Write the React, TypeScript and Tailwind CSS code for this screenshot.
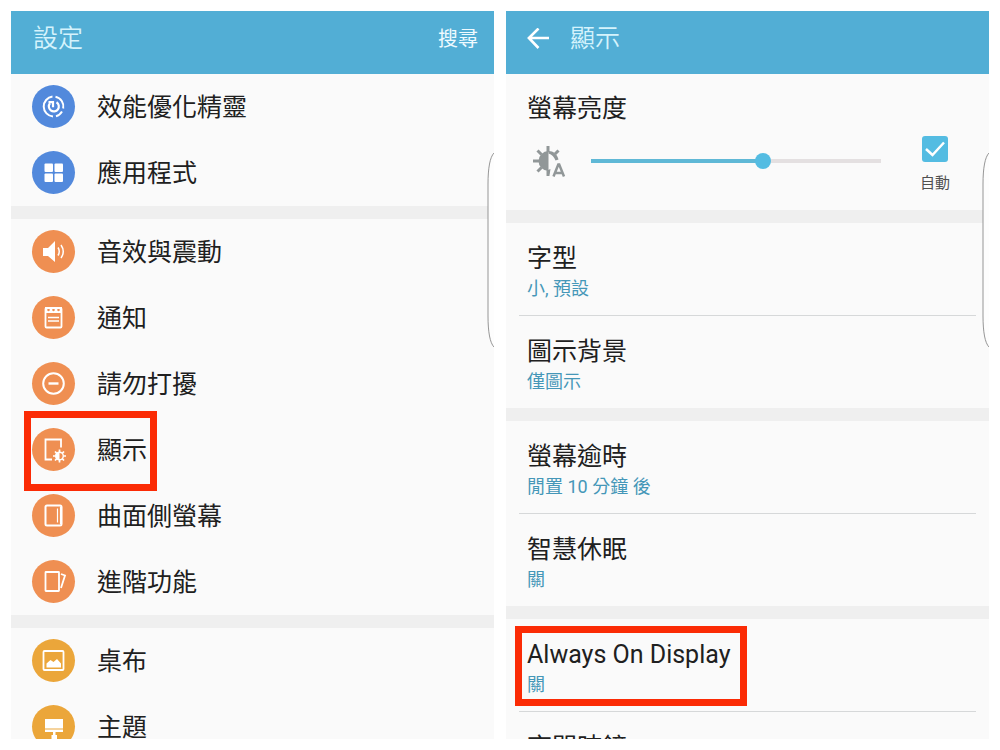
import type { ReactNode } from 'react'

interface MenuItem {
  label: string
  color: string
  icon: ReactNode
  highlighted?: boolean
}

interface OptionRowProps {
  title: string
  summary?: string
  divider?: boolean
  highlighted?: boolean
}

const BLUE = 'bg-[#5289dc]'
const ORANGE = 'bg-[#ef8f52]'
const YELLOW = 'bg-[#eba63a]'

const optimizerIcon = (
  <g fill="none" strokeWidth="2">
    <path d="M23.5 11.7A10 10 0 0 1 31.2 23.5M30 26.5A10 10 0 0 1 24 31.2M21 31.5A10 10 0 0 1 20.5 11.6" />
    <path d="M24.5 17.2A5 5 0 1 1 18 18.2M16.5 17.2h4.5v5" strokeWidth="2.2" />
  </g>
)

const appsIcon = (
  <g stroke="none">
    <rect x="12.5" y="12.5" width="8.5" height="8.5" rx="1" />
    <rect x="22.5" y="12.5" width="8.5" height="8.5" rx="1" />
    <rect x="12.5" y="22.5" width="8.5" height="8.5" rx="1" />
    <rect x="22.5" y="22.5" width="8.5" height="8.5" rx="1" />
  </g>
)

const soundIcon = (
  <g>
    <path d="M11 18h5l7-7v21l-7-6h-5z" stroke="none" />
    <path d="M26 17.5q2.5 4 0 8M29 15q4.5 6.5 0 13" fill="none" strokeWidth="1.5" />
  </g>
)

const noticeIcon = (
  <g>
    <rect x="13.5" y="12" width="16" height="19.5" rx="1" fill="none" strokeWidth="1.8" />
    <path
      d="M13 11h17v6H13zM16.5 12.6a1.3 1.3 0 1 0 .01 0zM21.5 12.6a1.3 1.3 0 1 0 .01 0zM26.5 12.6a1.3 1.3 0 1 0 .01 0z"
      fillRule="evenodd"
      stroke="none"
    />
    <path d="M16 21.5h11M16 25h11" strokeWidth="1.5" />
  </g>
)

const blockIcon = (
  <g fill="none">
    <circle cx="21.5" cy="21.5" r="10.3" strokeWidth="2" />
    <path d="M16.5 21.5h10" strokeWidth="2.4" />
  </g>
)

const displayIcon = (
  <g fill="none">
    <path d="M20 31.500h-6.500v-20h15.500v8" strokeWidth="1.8" />
    <circle cx="27.5" cy="28" r="3.8" strokeWidth="1.4" />
    <path d="M27.5 24a4 4 0 0 0 0 8z" fill="white" stroke="none" />
    <path
      d="M27.500 21.500v2.500M27.500 32v2.500M21 28h2.500M31.500 28h2.500M23 23.500l1.600 1.600M32 23.500l-1.600 1.600M23 32.500l1.600-1.600M32 32.500l-1.600-1.600"
      strokeWidth="1.7"
    />
  </g>
)

const edgeIcon = (
  <g fill="none">
    <rect x="13.5" y="11.5" width="16" height="20" rx="1.5" strokeWidth="2" />
    <path d="M25.5 14.5v14" strokeWidth="1.2" />
    <path d="M29 13v17" strokeWidth="2.2" />
  </g>
)

const advancedIcon = (
  <g fill="none">
    <rect x="13.5" y="12" width="13.5" height="19" rx="0.5" strokeWidth="1.8" />
    <path d="M29 14l4 1.500-4 12.500" strokeWidth="1.8" />
  </g>
)

const wallpaperIcon = (
  <g>
    <rect x="11.5" y="12" width="20" height="19" rx="1" fill="none" strokeWidth="1.8" />
    <path d="M14.500 28.500v-4l4-3.500 3 2 3.500-3 4 4.500v4z" stroke="none" />
  </g>
)

const themeIcon = (
  <g stroke="none">
    <path d="M13 14h18v9.500H13zM13 24.500h18V27h-7.500v3H25v6h-5.500v-6H21v-3h-8z" />
  </g>
)

const menuGroups: MenuItem[][] = [
  [
    { label: '效能優化精靈', color: BLUE, icon: optimizerIcon },
    { label: '應用程式', color: BLUE, icon: appsIcon },
  ],
  [
    { label: '音效與震動', color: ORANGE, icon: soundIcon },
    { label: '通知', color: ORANGE, icon: noticeIcon },
    { label: '請勿打擾', color: ORANGE, icon: blockIcon },
    { label: '顯示', color: ORANGE, icon: displayIcon, highlighted: true },
    { label: '曲面側螢幕', color: ORANGE, icon: edgeIcon },
    { label: '進階功能', color: ORANGE, icon: advancedIcon },
  ],
  [
    { label: '桌布', color: YELLOW, icon: wallpaperIcon },
    { label: '主題', color: YELLOW, icon: themeIcon },
  ],
]

const optionGroups: OptionRowProps[][] = [
  [
    { title: '字型', summary: '小, 預設', divider: true },
    { title: '圖示背景', summary: '僅圖示' },
  ],
  [
    { title: '螢幕逾時', summary: '閒置 10 分鐘 後', divider: true },
    { title: '智慧休眠', summary: '關' },
  ],
  [
    { title: 'Always On Display', summary: '關', divider: true, highlighted: true },
    { title: '夜間時鐘' },
  ],
]

function Separator() {
  return <div className="h-[13px] bg-[#efefef]" />
}

// Handle of the edge panel, lies over the right border of the screen
function EdgeHandle() {
  return (
    <svg className="absolute top-[141px] right-0" width="7" height="196" viewBox="0 0 7 196">
      <path d="M7 1C3 5 1 16 1 32v132c0 16 2 27 6 31z" fill="#fdfdfd" />
      <path d="M7 1C3 5 1 16 1 32v132c0 16 2 27 6 31" fill="none" stroke="#8a8a8a" strokeWidth="0.9" />
    </svg>
  )
}

function MenuRow({ label, color, icon, highlighted }: MenuItem) {
  return (
    <li className="relative">
      <button
        type="button"
        className="flex h-[66px] w-full items-center gap-[22px] pb-0.5 pl-[21px] text-left"
      >
        <span className={`size-[43px] shrink-0 rounded-full ${color}`}>
          <svg viewBox="0 0 43 43" fill="white" stroke="white" className="size-full" aria-hidden="true">
            {icon}
          </svg>
        </span>
        <span className="pt-1 text-[25px] leading-8">{label}</span>
      </button>
      {highlighted && (
        <span className="pointer-events-none absolute -top-1.5 left-[13px] h-20 w-[133px] border-[7px] border-[#fb2b05]" />
      )}
    </li>
  )
}

function OptionRow({ title, summary, divider, highlighted }: OptionRowProps) {
  return (
    <li className={`relative mx-[13px] ${divider ? 'border-b border-[#d6d8d9]' : ''}`}>
      <button type="button" className="block w-full px-2 pt-5 pb-3 text-left">
        <span className="block text-[25px] leading-8">{title}</span>
        {summary && <span className="block text-lg leading-7 text-[#4597b8]">{summary}</span>}
      </button>
      {highlighted && (
        <span className="pointer-events-none absolute top-[7px] -left-1 h-20 w-[232px] border-[7px] border-[#fb2b05]" />
      )}
    </li>
  )
}

function SettingsPanel() {
  return (
    <section className="relative min-w-0 flex-1 overflow-hidden bg-[#fafafa]">
      <header className="flex h-[63px] items-center justify-between bg-[#52aed5] pr-4 pb-2 pl-[22px]">
        <h1 className="text-[25px] leading-8 font-[350] text-[#d5f3fc]">設定</h1>
        <button type="button" className="text-xl leading-8 text-[#eefaff]">
          搜尋
        </button>
      </header>
      {menuGroups.map((group, index) => (
        <div key={index}>
          {index > 0 && <Separator />}
          <ul>
            {group.map((item) => (
              <MenuRow key={item.label} {...item} />
            ))}
          </ul>
        </div>
      ))}
      <EdgeHandle />
    </section>
  )
}

function BrightnessControl() {
  return (
    <div className="h-[136px] pt-[19px] pr-[38px] pl-[21px]">
      <label htmlFor="brightness" className="block text-[25px] leading-8">
        螢幕亮度
      </label>
      <div className="flex items-start pt-[11px]">
        <svg
          className="mt-[9px] ml-[5px] shrink-0"
          width="34"
          height="34"
          viewBox="0 0 34 34"
          fill="none"
          stroke="#919798"
          aria-hidden="true"
        >
          <path d="M16.5 6a10 10 0 0 0 0 20z" fill="#919798" stroke="none" />
          <path d="M16.5 6C21.500 6 25 9 26.500 14.500L23.500 15.500C22 12 20 9.500 16.500 8.500z" fill="#919798" stroke="none" />
          <path d="M16 1v6M1 16h6M5.5 5.500l4 4M26.500 5.500l-3.500 3.500M5.500 26.500l4-4M16 25v6" strokeWidth="3" />
          <path d="M21.500 31.500l4.800-12h.9l4.800 12M23 28h8" strokeWidth="2.500" />
          <path d="M16 25l2.500-1-1 6z" fill="#919798" stroke="none" />
        </svg>
        <div className="relative mt-[17px] ml-[25px] h-4 flex-1">
          <div className="absolute inset-x-0 top-1.5 h-1 bg-[#e4e0e1]">
            <div className="h-full w-[59%] bg-[#5fb8d6]" />
          </div>
          <input
            id="brightness"
            type="range"
            min="0"
            max="100"
            defaultValue="60"
            className="absolute inset-0 h-4 w-full appearance-none bg-transparent [&::-webkit-slider-thumb]:size-4 [&::-webkit-slider-thumb]:appearance-none [&::-webkit-slider-thumb]:rounded-full [&::-webkit-slider-thumb]:bg-[#54bce2]"
          />
        </div>
        <label className="ml-[38px] flex w-8 flex-col items-center text-[15px] leading-6 text-[#505050]">
          <span className="relative mb-[9px] size-[26px]">
            <input
              type="checkbox"
              defaultChecked
              className="block size-full appearance-none rounded-[3px] bg-[#54bce2]"
            />
            <svg
              className="pointer-events-none absolute inset-0"
              viewBox="0 0 26 26"
              fill="none"
              stroke="white"
              strokeWidth="2.5"
            >
              <path d="M4 13l6.5 6L22 6.5" />
            </svg>
          </span>
          自動
        </label>
      </div>
    </div>
  )
}

function DisplayPanel() {
  return (
    <section className="relative min-w-0 flex-1 overflow-hidden bg-[#fafafa]">
      <header className="flex h-[63px] items-center gap-[21px] bg-[#52aed5] pb-2 pl-[21px]">
        <button type="button" aria-label="返回">
          <svg width="22" height="22" viewBox="0 0 22 22" fill="none" stroke="white" strokeWidth="2.6">
            <path d="M22 10H2M11.5 0.500L1.900 10l9.600 10" />
          </svg>
        </button>
        <h1 className="text-[25px] leading-8 font-[350] text-[#d5f3fc]">顯示</h1>
      </header>
      <BrightnessControl />
      {optionGroups.map((group, index) => (
        <div key={index}>
          <Separator />
          <ul>
            {group.map((option) => (
              <OptionRow key={option.title} {...option} />
            ))}
          </ul>
        </div>
      ))}
      <EdgeHandle />
    </section>
  )
}

export default function App() {
  return (
    <main className="flex h-screen gap-3 bg-white p-[11px] font-[Roboto,'Noto_Sans_CJK_TC',sans-serif] text-[#202020]">
      <SettingsPanel />
      <DisplayPanel />
    </main>
  )
}
